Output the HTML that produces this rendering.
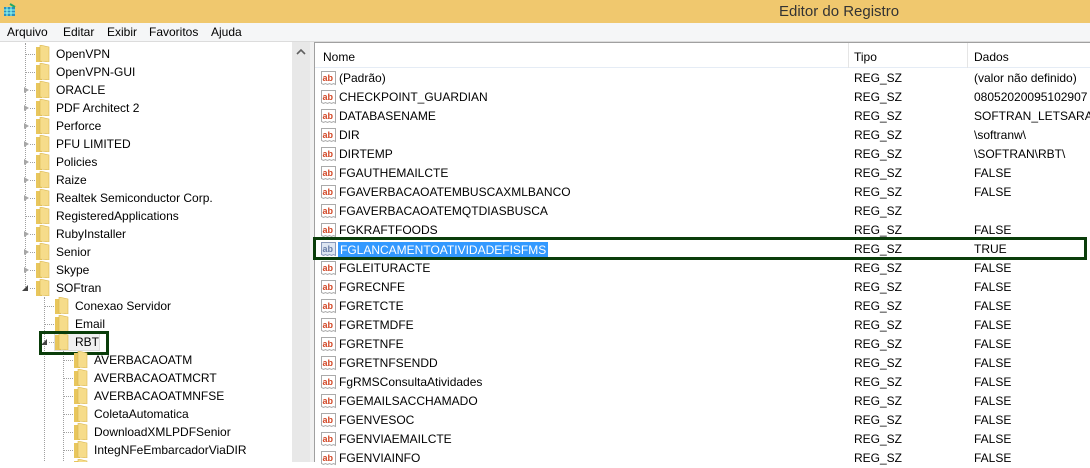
<!DOCTYPE html>
<html><head><meta charset="utf-8"><style>
*{margin:0;padding:0;box-sizing:border-box}
body{width:1090px;height:462px;overflow:hidden;background:#fff;font-family:"Liberation Sans",sans-serif;font-size:12px;color:#000;position:relative}
.abs{position:absolute}
#title{left:0;top:0;width:1090px;height:23px;background:#f0c86e}
#title span{position:absolute;left:779px;top:3px;font-size:15px;color:#333}
#menu{left:0;top:23px;width:1090px;height:19px;background:#f5f6f7;border-bottom:1px solid #dcdcdc}
#menu span{position:absolute;top:2px}
#tree{left:0;top:43px;width:292px;height:419px;background:#fff;overflow:hidden}
#sb{left:292px;top:42px;width:18px;height:420px;background:#e8e8e8}
#split{left:310px;top:42px;width:5px;height:420px;background:#f0f0f0;border-right:1px solid #a0a0a0}
#list{left:315px;top:42px;width:775px;height:420px;background:#fff;border-top:1px solid #a0a0a0}
.t{position:absolute;height:18px;line-height:18px;white-space:nowrap}
.f{position:absolute;width:14px;height:17px;top:0}
.tx{position:absolute;top:0}
.ar{position:absolute;top:6px;width:0;height:0;border-left:5px solid #a6a6a6;border-top:3.5px solid transparent;border-bottom:3.5px solid transparent}
.ar2{position:absolute;top:6px;width:0;height:0;border-right:6px solid #444;border-top:6px solid transparent}
.hl{position:absolute;border-top:1px dotted #a0a0a0;height:0}
.vl{position:absolute;border-left:1px dotted #a0a0a0;width:0}
.lr{position:absolute;left:0;width:775px;height:19px;line-height:19px;white-space:nowrap}
.lr .ic{position:absolute;left:6px;top:2px;width:15px;height:15px}
.lr .n{position:absolute;left:24px}
.lr .ty{position:absolute;left:539px}
.lr .d{position:absolute;left:659px}
</style></head><body>
<div id="title" class="abs"><svg class="abs" style="left:3px;top:3px" width="14" height="14"><rect x="1" y="4" width="11" height="9" fill="#2a8fbd"/><path d="M1 7h11M1 10h11M4 4v9M8 4v9" stroke="#9fe" stroke-width="1"/><path d="M7 1l5 3" stroke="#2a6" stroke-width="2"/></svg><span>Editor do Registro</span></div>
<div id="menu" class="abs"><span style="left:7px">Arquivo</span><span style="left:63px">Editar</span><span style="left:107px">Exibir</span><span style="left:149px">Favoritos</span><span style="left:211px">Ajuda</span></div>

<div id="tree" class="abs">
<div class="vl" style="left:25px;top:0;height:246px"></div>
<div class="vl" style="left:44px;top:254px;height:170px"></div>
<div class="vl" style="left:63px;top:308px;height:120px"></div>

<div class="t" style="top:2px;left:0;width:292px"><div class="hl" style="left:26px;top:9px;width:9px"></div><svg class="f" style="left:36px" viewBox="0 0 14 17"><path d="M0 2h5l1 1v14H0z" fill="#e8c65c"/><path d="M4 0l9 2v15l-9-1z" fill="#f6dc8a" stroke="#d9b750" stroke-width=".6"/></svg><span class="tx" style="left:56px">OpenVPN</span></div>
<div class="t" style="top:20px;left:0;width:292px"><div class="hl" style="left:26px;top:9px;width:9px"></div><svg class="f" style="left:36px" viewBox="0 0 14 17"><path d="M0 2h5l1 1v14H0z" fill="#e8c65c"/><path d="M4 0l9 2v15l-9-1z" fill="#f6dc8a" stroke="#d9b750" stroke-width=".6"/></svg><span class="tx" style="left:56px">OpenVPN-GUI</span></div>
<div class="t" style="top:38px;left:0;width:292px"><div class="ar" style="left:24px"></div><div class="hl" style="left:30px;top:9px;width:5px"></div><svg class="f" style="left:36px" viewBox="0 0 14 17"><path d="M0 2h5l1 1v14H0z" fill="#e8c65c"/><path d="M4 0l9 2v15l-9-1z" fill="#f6dc8a" stroke="#d9b750" stroke-width=".6"/></svg><span class="tx" style="left:56px">ORACLE</span></div>
<div class="t" style="top:56px;left:0;width:292px"><div class="ar" style="left:24px"></div><div class="hl" style="left:30px;top:9px;width:5px"></div><svg class="f" style="left:36px" viewBox="0 0 14 17"><path d="M0 2h5l1 1v14H0z" fill="#e8c65c"/><path d="M4 0l9 2v15l-9-1z" fill="#f6dc8a" stroke="#d9b750" stroke-width=".6"/></svg><span class="tx" style="left:56px">PDF Architect 2</span></div>
<div class="t" style="top:74px;left:0;width:292px"><div class="ar" style="left:24px"></div><div class="hl" style="left:30px;top:9px;width:5px"></div><svg class="f" style="left:36px" viewBox="0 0 14 17"><path d="M0 2h5l1 1v14H0z" fill="#e8c65c"/><path d="M4 0l9 2v15l-9-1z" fill="#f6dc8a" stroke="#d9b750" stroke-width=".6"/></svg><span class="tx" style="left:56px">Perforce</span></div>
<div class="t" style="top:92px;left:0;width:292px"><div class="ar" style="left:24px"></div><div class="hl" style="left:30px;top:9px;width:5px"></div><svg class="f" style="left:36px" viewBox="0 0 14 17"><path d="M0 2h5l1 1v14H0z" fill="#e8c65c"/><path d="M4 0l9 2v15l-9-1z" fill="#f6dc8a" stroke="#d9b750" stroke-width=".6"/></svg><span class="tx" style="left:56px">PFU LIMITED</span></div>
<div class="t" style="top:110px;left:0;width:292px"><div class="ar" style="left:24px"></div><div class="hl" style="left:30px;top:9px;width:5px"></div><svg class="f" style="left:36px" viewBox="0 0 14 17"><path d="M0 2h5l1 1v14H0z" fill="#e8c65c"/><path d="M4 0l9 2v15l-9-1z" fill="#f6dc8a" stroke="#d9b750" stroke-width=".6"/></svg><span class="tx" style="left:56px">Policies</span></div>
<div class="t" style="top:128px;left:0;width:292px"><div class="ar" style="left:24px"></div><div class="hl" style="left:30px;top:9px;width:5px"></div><svg class="f" style="left:36px" viewBox="0 0 14 17"><path d="M0 2h5l1 1v14H0z" fill="#e8c65c"/><path d="M4 0l9 2v15l-9-1z" fill="#f6dc8a" stroke="#d9b750" stroke-width=".6"/></svg><span class="tx" style="left:56px">Raize</span></div>
<div class="t" style="top:146px;left:0;width:292px"><div class="ar" style="left:24px"></div><div class="hl" style="left:30px;top:9px;width:5px"></div><svg class="f" style="left:36px" viewBox="0 0 14 17"><path d="M0 2h5l1 1v14H0z" fill="#e8c65c"/><path d="M4 0l9 2v15l-9-1z" fill="#f6dc8a" stroke="#d9b750" stroke-width=".6"/></svg><span class="tx" style="left:56px">Realtek Semiconductor Corp.</span></div>
<div class="t" style="top:164px;left:0;width:292px"><div class="hl" style="left:26px;top:9px;width:9px"></div><svg class="f" style="left:36px" viewBox="0 0 14 17"><path d="M0 2h5l1 1v14H0z" fill="#e8c65c"/><path d="M4 0l9 2v15l-9-1z" fill="#f6dc8a" stroke="#d9b750" stroke-width=".6"/></svg><span class="tx" style="left:56px">RegisteredApplications</span></div>
<div class="t" style="top:182px;left:0;width:292px"><div class="ar" style="left:24px"></div><div class="hl" style="left:30px;top:9px;width:5px"></div><svg class="f" style="left:36px" viewBox="0 0 14 17"><path d="M0 2h5l1 1v14H0z" fill="#e8c65c"/><path d="M4 0l9 2v15l-9-1z" fill="#f6dc8a" stroke="#d9b750" stroke-width=".6"/></svg><span class="tx" style="left:56px">RubyInstaller</span></div>
<div class="t" style="top:200px;left:0;width:292px"><div class="ar" style="left:24px"></div><div class="hl" style="left:30px;top:9px;width:5px"></div><svg class="f" style="left:36px" viewBox="0 0 14 17"><path d="M0 2h5l1 1v14H0z" fill="#e8c65c"/><path d="M4 0l9 2v15l-9-1z" fill="#f6dc8a" stroke="#d9b750" stroke-width=".6"/></svg><span class="tx" style="left:56px">Senior</span></div>
<div class="t" style="top:218px;left:0;width:292px"><div class="ar" style="left:24px"></div><div class="hl" style="left:30px;top:9px;width:5px"></div><svg class="f" style="left:36px" viewBox="0 0 14 17"><path d="M0 2h5l1 1v14H0z" fill="#e8c65c"/><path d="M4 0l9 2v15l-9-1z" fill="#f6dc8a" stroke="#d9b750" stroke-width=".6"/></svg><span class="tx" style="left:56px">Skype</span></div>
<div class="t" style="top:236px;left:0;width:292px"><div class="ar2" style="left:22px"></div><div class="hl" style="left:30px;top:9px;width:5px"></div><svg class="f" style="left:36px" viewBox="0 0 14 17"><path d="M0 2h5l1 1v14H0z" fill="#e8c65c"/><path d="M4 0l9 2v15l-9-1z" fill="#f6dc8a" stroke="#d9b750" stroke-width=".6"/></svg><span class="tx" style="left:56px">SOFtran</span></div>
<div class="t" style="top:254px;left:0;width:292px"><div class="hl" style="left:45px;top:9px;width:9px"></div><svg class="f" style="left:55px" viewBox="0 0 14 17"><path d="M0 2h5l1 1v14H0z" fill="#e8c65c"/><path d="M4 0l9 2v15l-9-1z" fill="#f6dc8a" stroke="#d9b750" stroke-width=".6"/></svg><span class="tx" style="left:75px">Conexao Servidor</span></div>
<div class="t" style="top:272px;left:0;width:292px"><div class="hl" style="left:45px;top:9px;width:9px"></div><svg class="f" style="left:55px" viewBox="0 0 14 17"><path d="M0 2h5l1 1v14H0z" fill="#e8c65c"/><path d="M4 0l9 2v15l-9-1z" fill="#f6dc8a" stroke="#d9b750" stroke-width=".6"/></svg><span class="tx" style="left:75px">Email</span></div>
<div class="t" style="top:290px;left:0;width:292px"><div style="position:absolute;left:54px;top:0;width:46px;height:18px;background:#f0f0f0;border:1px solid #ddd"></div><div class="ar2" style="left:41px"></div><div class="hl" style="left:49px;top:9px;width:5px"></div><svg class="f" style="left:55px" viewBox="0 0 14 17"><path d="M0 2h5l1 1v14H0z" fill="#e8c65c"/><path d="M4 0l9 2v15l-9-1z" fill="#f6dc8a" stroke="#d9b750" stroke-width=".6"/></svg><span class="tx" style="left:75px">RBT</span></div>
<div class="abs" style="left:39px;top:288px;width:70px;height:24px;border:3px solid #0a3d0a"></div>
<div class="t" style="top:308px;left:0;width:292px"><div class="hl" style="left:64px;top:9px;width:9px"></div><svg class="f" style="left:74px" viewBox="0 0 14 17"><path d="M0 2h5l1 1v14H0z" fill="#e8c65c"/><path d="M4 0l9 2v15l-9-1z" fill="#f6dc8a" stroke="#d9b750" stroke-width=".6"/></svg><span class="tx" style="left:94px">AVERBACAOATM</span></div>
<div class="t" style="top:326px;left:0;width:292px"><div class="hl" style="left:64px;top:9px;width:9px"></div><svg class="f" style="left:74px" viewBox="0 0 14 17"><path d="M0 2h5l1 1v14H0z" fill="#e8c65c"/><path d="M4 0l9 2v15l-9-1z" fill="#f6dc8a" stroke="#d9b750" stroke-width=".6"/></svg><span class="tx" style="left:94px">AVERBACAOATMCRT</span></div>
<div class="t" style="top:344px;left:0;width:292px"><div class="hl" style="left:64px;top:9px;width:9px"></div><svg class="f" style="left:74px" viewBox="0 0 14 17"><path d="M0 2h5l1 1v14H0z" fill="#e8c65c"/><path d="M4 0l9 2v15l-9-1z" fill="#f6dc8a" stroke="#d9b750" stroke-width=".6"/></svg><span class="tx" style="left:94px">AVERBACAOATMNFSE</span></div>
<div class="t" style="top:362px;left:0;width:292px"><div class="hl" style="left:64px;top:9px;width:9px"></div><svg class="f" style="left:74px" viewBox="0 0 14 17"><path d="M0 2h5l1 1v14H0z" fill="#e8c65c"/><path d="M4 0l9 2v15l-9-1z" fill="#f6dc8a" stroke="#d9b750" stroke-width=".6"/></svg><span class="tx" style="left:94px">ColetaAutomatica</span></div>
<div class="t" style="top:380px;left:0;width:292px"><div class="hl" style="left:64px;top:9px;width:9px"></div><svg class="f" style="left:74px" viewBox="0 0 14 17"><path d="M0 2h5l1 1v14H0z" fill="#e8c65c"/><path d="M4 0l9 2v15l-9-1z" fill="#f6dc8a" stroke="#d9b750" stroke-width=".6"/></svg><span class="tx" style="left:94px">DownloadXMLPDFSenior</span></div>
<div class="t" style="top:398px;left:0;width:292px"><div class="hl" style="left:64px;top:9px;width:9px"></div><svg class="f" style="left:74px" viewBox="0 0 14 17"><path d="M0 2h5l1 1v14H0z" fill="#e8c65c"/><path d="M4 0l9 2v15l-9-1z" fill="#f6dc8a" stroke="#d9b750" stroke-width=".6"/></svg><span class="tx" style="left:94px">IntegNFeEmbarcadorViaDIR</span></div>
<div class="t" style="top:416px;left:0;width:292px"><svg class="f" style="left:74px" viewBox="0 0 14 17"><path d="M0 2h5l1 1v14H0z" fill="#e8c65c"/><path d="M4 0l9 2v15l-9-1z" fill="#f6dc8a" stroke="#d9b750" stroke-width=".6"/></svg></div>
</div>
<div id="sb" class="abs"><svg class="abs" style="left:4px;top:7px" width="10" height="6"><path d="M1 5l4-4 4 4" stroke="#606060" stroke-width="1.6" fill="none"/></svg></div>
<div id="split" class="abs"></div>

<div id="list" class="abs">
<div class="abs" style="left:0;top:0;width:775px;height:25px;border-bottom:1px solid #e5ecf5">
<span class="abs" style="left:8px;top:7px">Nome</span>
<div class="abs" style="left:533px;top:0;width:1px;height:25px;background:#e5e5e5"></div>
<span class="abs" style="left:539px;top:7px">Tipo</span>
<div class="abs" style="left:652px;top:0;width:1px;height:25px;background:#e5e5e5"></div>
<span class="abs" style="left:659px;top:7px">Dados</span>
</div>
<div class="abs" style="left:0;top:26px;width:775px">
<div class="lr" style="top:0"><svg class="ic" viewBox="0 0 15 15"><path d="M0.5 0.5h14v13l-2-1-2 1-2-1-2 1-2-1-2 1-2-1z" fill="#fff" stroke="#aaa"/><text x="1.5" y="10" font-size="9" font-weight="bold" fill="#d24726" font-family="Liberation Sans">ab</text></svg><span class="n">(Padrão)</span><span class="ty">REG_SZ</span><span class="d">(valor não definido)</span></div>
<div class="lr" style="top:19px"><svg class="ic" viewBox="0 0 15 15"><path d="M0.5 0.5h14v13l-2-1-2 1-2-1-2 1-2-1-2 1-2-1z" fill="#fff" stroke="#aaa"/><text x="1.5" y="10" font-size="9" font-weight="bold" fill="#d24726" font-family="Liberation Sans">ab</text></svg><span class="n">CHECKPOINT_GUARDIAN</span><span class="ty">REG_SZ</span><span class="d">08052020095102907</span></div>
<div class="lr" style="top:38px"><svg class="ic" viewBox="0 0 15 15"><path d="M0.5 0.5h14v13l-2-1-2 1-2-1-2 1-2-1-2 1-2-1z" fill="#fff" stroke="#aaa"/><text x="1.5" y="10" font-size="9" font-weight="bold" fill="#d24726" font-family="Liberation Sans">ab</text></svg><span class="n">DATABASENAME</span><span class="ty">REG_SZ</span><span class="d">SOFTRAN_LETSARA</span></div>
<div class="lr" style="top:57px"><svg class="ic" viewBox="0 0 15 15"><path d="M0.5 0.5h14v13l-2-1-2 1-2-1-2 1-2-1-2 1-2-1z" fill="#fff" stroke="#aaa"/><text x="1.5" y="10" font-size="9" font-weight="bold" fill="#d24726" font-family="Liberation Sans">ab</text></svg><span class="n">DIR</span><span class="ty">REG_SZ</span><span class="d">\softranw\</span></div>
<div class="lr" style="top:76px"><svg class="ic" viewBox="0 0 15 15"><path d="M0.5 0.5h14v13l-2-1-2 1-2-1-2 1-2-1-2 1-2-1z" fill="#fff" stroke="#aaa"/><text x="1.5" y="10" font-size="9" font-weight="bold" fill="#d24726" font-family="Liberation Sans">ab</text></svg><span class="n">DIRTEMP</span><span class="ty">REG_SZ</span><span class="d">\SOFTRAN\RBT\</span></div>
<div class="lr" style="top:95px"><svg class="ic" viewBox="0 0 15 15"><path d="M0.5 0.5h14v13l-2-1-2 1-2-1-2 1-2-1-2 1-2-1z" fill="#fff" stroke="#aaa"/><text x="1.5" y="10" font-size="9" font-weight="bold" fill="#d24726" font-family="Liberation Sans">ab</text></svg><span class="n">FGAUTHEMAILCTE</span><span class="ty">REG_SZ</span><span class="d">FALSE</span></div>
<div class="lr" style="top:114px"><svg class="ic" viewBox="0 0 15 15"><path d="M0.5 0.5h14v13l-2-1-2 1-2-1-2 1-2-1-2 1-2-1z" fill="#fff" stroke="#aaa"/><text x="1.5" y="10" font-size="9" font-weight="bold" fill="#d24726" font-family="Liberation Sans">ab</text></svg><span class="n">FGAVERBACAOATEMBUSCAXMLBANCO</span><span class="ty">REG_SZ</span><span class="d">FALSE</span></div>
<div class="lr" style="top:133px"><svg class="ic" viewBox="0 0 15 15"><path d="M0.5 0.5h14v13l-2-1-2 1-2-1-2 1-2-1-2 1-2-1z" fill="#fff" stroke="#aaa"/><text x="1.5" y="10" font-size="9" font-weight="bold" fill="#d24726" font-family="Liberation Sans">ab</text></svg><span class="n">FGAVERBACAOATEMQTDIASBUSCA</span><span class="ty">REG_SZ</span><span class="d"></span></div>
<div class="lr" style="top:152px"><svg class="ic" viewBox="0 0 15 15"><path d="M0.5 0.5h14v13l-2-1-2 1-2-1-2 1-2-1-2 1-2-1z" fill="#fff" stroke="#aaa"/><text x="1.5" y="10" font-size="9" font-weight="bold" fill="#d24726" font-family="Liberation Sans">ab</text></svg><span class="n">FGKRAFTFOODS</span><span class="ty">REG_SZ</span><span class="d">FALSE</span></div>
<div class="lr" style="top:171px"><svg class="ic" viewBox="0 0 15 15"><path d="M0.5 0.5h14v13l-2-1-2 1-2-1-2 1-2-1-2 1-2-1z" fill="#dde6f2" stroke="#8899bb"/><text x="1.5" y="10" font-size="9" font-weight="bold" fill="#6a7fa8" font-family="Liberation Sans">ab</text></svg><span class="n" style="background:#3399ff;color:#fff;left:23px;padding:0 2px;line-height:16px;top:2px">FGLANCAMENTOATIVIDADEFISFMS</span><span class="ty">REG_SZ</span><span class="d">TRUE</span></div>
<div class="lr" style="top:190px"><svg class="ic" viewBox="0 0 15 15"><path d="M0.5 0.5h14v13l-2-1-2 1-2-1-2 1-2-1-2 1-2-1z" fill="#fff" stroke="#aaa"/><text x="1.5" y="10" font-size="9" font-weight="bold" fill="#d24726" font-family="Liberation Sans">ab</text></svg><span class="n">FGLEITURACTE</span><span class="ty">REG_SZ</span><span class="d">FALSE</span></div>
<div class="lr" style="top:209px"><svg class="ic" viewBox="0 0 15 15"><path d="M0.5 0.5h14v13l-2-1-2 1-2-1-2 1-2-1-2 1-2-1z" fill="#fff" stroke="#aaa"/><text x="1.5" y="10" font-size="9" font-weight="bold" fill="#d24726" font-family="Liberation Sans">ab</text></svg><span class="n">FGRECNFE</span><span class="ty">REG_SZ</span><span class="d">FALSE</span></div>
<div class="lr" style="top:228px"><svg class="ic" viewBox="0 0 15 15"><path d="M0.5 0.5h14v13l-2-1-2 1-2-1-2 1-2-1-2 1-2-1z" fill="#fff" stroke="#aaa"/><text x="1.5" y="10" font-size="9" font-weight="bold" fill="#d24726" font-family="Liberation Sans">ab</text></svg><span class="n">FGRETCTE</span><span class="ty">REG_SZ</span><span class="d">FALSE</span></div>
<div class="lr" style="top:247px"><svg class="ic" viewBox="0 0 15 15"><path d="M0.5 0.5h14v13l-2-1-2 1-2-1-2 1-2-1-2 1-2-1z" fill="#fff" stroke="#aaa"/><text x="1.5" y="10" font-size="9" font-weight="bold" fill="#d24726" font-family="Liberation Sans">ab</text></svg><span class="n">FGRETMDFE</span><span class="ty">REG_SZ</span><span class="d">FALSE</span></div>
<div class="lr" style="top:266px"><svg class="ic" viewBox="0 0 15 15"><path d="M0.5 0.5h14v13l-2-1-2 1-2-1-2 1-2-1-2 1-2-1z" fill="#fff" stroke="#aaa"/><text x="1.5" y="10" font-size="9" font-weight="bold" fill="#d24726" font-family="Liberation Sans">ab</text></svg><span class="n">FGRETNFE</span><span class="ty">REG_SZ</span><span class="d">FALSE</span></div>
<div class="lr" style="top:285px"><svg class="ic" viewBox="0 0 15 15"><path d="M0.5 0.5h14v13l-2-1-2 1-2-1-2 1-2-1-2 1-2-1z" fill="#fff" stroke="#aaa"/><text x="1.5" y="10" font-size="9" font-weight="bold" fill="#d24726" font-family="Liberation Sans">ab</text></svg><span class="n">FGRETNFSENDD</span><span class="ty">REG_SZ</span><span class="d">FALSE</span></div>
<div class="lr" style="top:304px"><svg class="ic" viewBox="0 0 15 15"><path d="M0.5 0.5h14v13l-2-1-2 1-2-1-2 1-2-1-2 1-2-1z" fill="#fff" stroke="#aaa"/><text x="1.5" y="10" font-size="9" font-weight="bold" fill="#d24726" font-family="Liberation Sans">ab</text></svg><span class="n">FgRMSConsultaAtividades</span><span class="ty">REG_SZ</span><span class="d">FALSE</span></div>
<div class="lr" style="top:323px"><svg class="ic" viewBox="0 0 15 15"><path d="M0.5 0.5h14v13l-2-1-2 1-2-1-2 1-2-1-2 1-2-1z" fill="#fff" stroke="#aaa"/><text x="1.5" y="10" font-size="9" font-weight="bold" fill="#d24726" font-family="Liberation Sans">ab</text></svg><span class="n">FGEMAILSACCHAMADO</span><span class="ty">REG_SZ</span><span class="d">FALSE</span></div>
<div class="lr" style="top:342px"><svg class="ic" viewBox="0 0 15 15"><path d="M0.5 0.5h14v13l-2-1-2 1-2-1-2 1-2-1-2 1-2-1z" fill="#fff" stroke="#aaa"/><text x="1.5" y="10" font-size="9" font-weight="bold" fill="#d24726" font-family="Liberation Sans">ab</text></svg><span class="n">FGENVESOC</span><span class="ty">REG_SZ</span><span class="d">FALSE</span></div>
<div class="lr" style="top:361px"><svg class="ic" viewBox="0 0 15 15"><path d="M0.5 0.5h14v13l-2-1-2 1-2-1-2 1-2-1-2 1-2-1z" fill="#fff" stroke="#aaa"/><text x="1.5" y="10" font-size="9" font-weight="bold" fill="#d24726" font-family="Liberation Sans">ab</text></svg><span class="n">FGENVIAEMAILCTE</span><span class="ty">REG_SZ</span><span class="d">FALSE</span></div>
<div class="lr" style="top:380px"><svg class="ic" viewBox="0 0 15 15"><path d="M0.5 0.5h14v13l-2-1-2 1-2-1-2 1-2-1-2 1-2-1z" fill="#fff" stroke="#aaa"/><text x="1.5" y="10" font-size="9" font-weight="bold" fill="#d24726" font-family="Liberation Sans">ab</text></svg><span class="n">FGENVIAINFO</span><span class="ty">REG_SZ</span><span class="d">FALSE</span></div>
</div>
</div>
<div class="abs" style="left:313px;top:237px;width:774px;height:23px;border:3px solid #0a3d0a"></div>
</body></html>
